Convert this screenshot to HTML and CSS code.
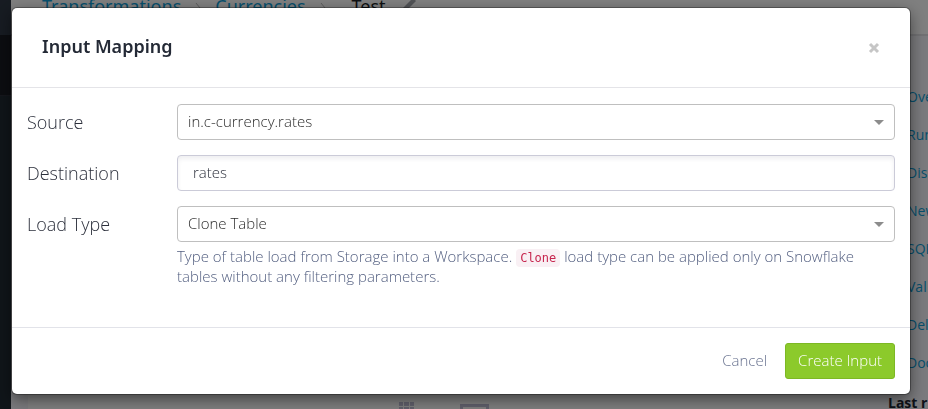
FILE: index.html
```html
<!DOCTYPE html>
<html lang="en">
<head>
<meta charset="utf-8">
<title>Input Mapping</title>
<link rel="stylesheet" href="styles.css">
</head>
<body>
<div class="page">
  <aside class="rail"><div class="rail-top"></div><div class="rail-mid"></div></aside>
  <div class="main">
    <header class="topbar">
      <a href="#">Transformations</a>
      <svg class="chevron" viewBox="0 0 6 12"><path d="M1 1l4 5-4 5"/></svg>
      <a href="#">Currencies</a>
      <svg class="chevron" viewBox="0 0 6 12"><path d="M1 1l4 5-4 5"/></svg>
      <span class="current">Test</span>
      <svg class="pencil" viewBox="0 0 16 16"><path d="M13 0L3 10l-2 5 5-2L16 3z"/></svg>
    </header>
    <div class="columns">
      <div class="content">
        <svg class="grid-icon" viewBox="0 0 16 16"><path d="M0 0h4v4H0zM5 0h5v4H5zM11 0h4v4h-4zM0 5h4v4H0zM5 5h5v4H5zM11 5h4v4h-4zM0 10h4v4H0zM5 10h5v4H5zM11 10h4v4h-4z"/></svg>
        <svg class="screen-icon" viewBox="0 0 30 20"><path d="M1.500 1.500h26v16h-26z"/></svg>
      </div>
      <nav class="side">
        <a href="#">Ove</a>
        <a href="#">Run</a>
        <a href="#">Dis</a>
        <a href="#">New</a>
        <a href="#">SQL</a>
        <a href="#">Val</a>
        <a href="#">Del</a>
        <a href="#">Doc</a>
        <h3>Last r</h3>
      </nav>
    </div>
  </div>
</div>
<div class="backdrop">
  <form class="modal" role="dialog" aria-labelledby="title">
    <header class="modal-header">
      <h1 id="title">Input Mapping</h1>
      <button class="close" type="button" aria-label="Close"><svg viewBox="0 0 12 12"><path d="M2 2l8 8M10 2l-8 8"/></svg></button>
    </header>
    <div class="modal-body">
      <div class="row">
        <label for="source">Source</label>
        <div class="field select"><select id="source"><option>in.c-currency.rates</option></select></div>
      </div>
      <div class="row">
        <label for="destination">Destination</label>
        <div class="field"><input id="destination" type="text" value="rates"></div>
      </div>
      <div class="row">
        <label for="load">Load Type</label>
        <div class="field select"><select id="load"><option>Clone Table</option></select></div>
        <p class="help">Type of table load from Storage into a Workspace. <code>Clone</code> load type can be applied only on Snowflake tables without any filtering parameters.</p>
      </div>
    </div>
    <footer class="modal-footer">
      <button class="cancel" type="button">Cancel</button>
      <button class="create" type="submit">Create Input</button>
    </footer>
  </form>
</div>
</body>
</html>
```
FILE: styles.css
```css
* { box-sizing: border-box; }
body {
  margin: 0;
  height: 100vh;
  overflow: hidden;
  font: 15px/20px "Open Sans", "Noto Sans", sans-serif;
  font-weight: 350;
  color: #2b2f3b;
}
a { color: #0e9ed8; text-decoration: none; }
button, input, select { font: inherit; margin: 0; }

.page { display: flex; height: 100vh; overflow: hidden; font-weight: 400; }
.rail { flex: none; width: 11px; background: #202a33; }
.rail-top { height: 35px; background: #2e3744; }
.rail-mid { height: 61px; background: #181b22; border-bottom: 1px solid #2a2d38; }
.main { flex: 1; min-width: 0; display: flex; flex-direction: column; background: #f5f5fa; }
.topbar {
  flex: none;
  display: flex;
  align-items: flex-start;
  height: 36px;
  padding-left: 31px;
  background: #fff;
  border-bottom: 2px solid #e2e2e6;
  font-family: "Noto Sans", sans-serif;
  font-size: 18px;
  line-height: 12px;
}
.chevron { width: 6px; height: 12px; margin: 2px 14px 0 14px; fill: none; stroke: #bbb; }
.current { margin-left: 12px; color: #1c1f26; }
.pencil { width: 16px; height: 16px; margin: -2px 0 0 14px; fill: #a2a5ac; }
.columns { flex: 1; display: grid; grid-template-columns: 1fr 68px; }
.content {
  display: flex;
  align-items: flex-end;
  gap: 45px;
  height: 373px;
  margin-left: 17px;
  padding-left: 371px;
  background: #fff;
}
.grid-icon { width: 16px; height: 16px; margin-bottom: -9px; fill: #c2c0d8; }
.screen-icon { width: 30px; height: 20px; margin-bottom: -15px; fill: none; stroke: #c2c0d8; stroke-width: 3; }
.side { display: flex; flex-direction: column; gap: 18px; padding: 51px 0 0 28px; white-space: nowrap; font-size: 14px; }
.side a { padding-left: 19px; }
.side h3 { margin: 2px 0 0; font-size: 14px; line-height: 20px; color: #202532; }

.backdrop { position: fixed; inset: 0; padding: 8px 18px 8px 12px; background: rgba(0, 0, 0, 0.5); }
.modal { background: #fff; border-radius: 5px; box-shadow: 0 0 0 1px rgba(0, 0, 0, 0.3), 0 5px 15px rgba(0, 0, 0, 0.5); }
.modal-header {
  display: flex;
  justify-content: space-between;
  align-items: center;
  height: 80px;
  padding: 0 30px;
  border-bottom: 1px solid #e4e4e8;
}
.modal-header h1 { margin: 0 0 4px; font-family: "Noto Sans", sans-serif; font-size: 18px; line-height: 24px; font-weight: 600; color: #242a36; }
.close { display: flex; padding: 0; border: 0; background: none; }
.close svg { width: 12px; height: 12px; fill: none; stroke: #c6c6c6; stroke-width: 3; }
.modal-body { display: flex; flex-direction: column; gap: 15px; padding: 16px 15px 41px; }
.row { display: grid; grid-template-columns: 150px 1fr; align-items: center; }
.row label { font-size: 18px; line-height: 24px; }
.field { display: flex; position: relative; }
.field input, .field select {
  width: 100%;
  height: 36px;
  padding: 0 32px 2px 10px;
  border: 1px solid #bfbfbf;
  border-radius: 4px;
  background: #fff;
  color: #2c2c2c;
  font-size: 15px;
  appearance: none;
}
.field input { padding-left: 15px; border-color: #cbcbd8; box-shadow: inset 0 3px 4px rgba(30, 30, 60, 0.07); color: #2b2f3b; }
.select::after {
  content: "";
  position: absolute;
  right: 11px;
  top: 16px;
  border: 5px solid transparent;
  border-top-color: #8c8c8c;
  border-bottom: 0;
  pointer-events: none;
}
.help { grid-column: 2; margin: 4px 0 0; font-size: 15px; color: #535f80; }
.help code { padding: 2px 4px; border-radius: 4px; background: #f9f0f4; color: #c7254e; font: 12px "DejaVu Sans Mono", monospace; }
.modal-footer {
  display: flex;
  justify-content: flex-end;
  align-items: center;
  gap: 18px;
  padding: 15px;
  border-top: 1px solid #e2e3e9;
}
.cancel { padding: 0 0 2px; border: 0; background: none; color: #68728f; font-size: 15px; }
.create { height: 36px; padding: 0 12px 2px; border: 1px solid #7db824; border-radius: 3px; background: #8cca2b; color: #fff; font-size: 15px; }
```
